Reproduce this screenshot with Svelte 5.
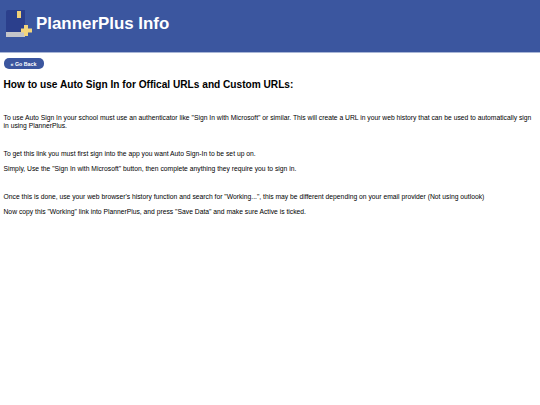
<script>
  const paragraphs = [
    { text: 'To use Auto Sign In your school must use an authenticator like "Sign In with Microsoft" or similar. This will create a URL in your web history that can be used to automatically sign in using PlannerPlus.', gap: true },
    { text: 'To get this link you must first sign into the app you want Auto Sign-In to be set up on.' },
    { text: 'Simply, Use the "Sign In with Microsoft" button, then complete anything they require you to sign in.', gap: true },
    { text: 'Once this is done, use your web browser\'s history function and search for "Working...", this may be different depending on your email provider (Not using outlook)' },
    { text: 'Now copy this "Working" link into PlannerPlus, and press "Save Data" and make sure Active is ticked.' }
  ];
</script>

<header class="banner">
  <svg class="logo" width="27" height="28" viewBox="0 0 27 28" aria-hidden="true">
    <path d="M0 2 Q0 0 2 0 H19 V22 H0 Z" fill="#2b3f8c" />
    <path d="M11 1 H15 V8 H11 Z" fill="#f0cf78" />
    <rect x="0" y="22" width="19" height="5" fill="#c4c5c9" />
    <rect x="18" y="15" width="4" height="11" fill="#f3d57c" />
    <rect x="15" y="18.5" width="11" height="4" fill="#f3d57c" />
  </svg>
  <h1>PlannerPlus Info</h1>
</header>

<main class="content">
  <button class="back">« Go Back</button>
  <h2>How to use Auto Sign In for Offical URLs and Custom URLs:</h2>
  {#each paragraphs as p}
    <p class:gap={p.gap}>{p.text}</p>
  {/each}
</main>

<style>
  :global(body) {
    background: #fff;
    font-family: "Liberation Sans", Arial, sans-serif;
    color: #000;
  }

  .banner {
    display: flex;
    align-items: center;
    gap: 3px;
    height: 53px;
    box-sizing: border-box;
    padding: 0 0 5px 6px;
    background: #3b569f;
    border-bottom: 1px solid #a9b6d6;
  }

  .logo {
    flex: none;
    margin-top: 1px;
  }

  h1 {
    margin: 0;
    font-size: 16.9px;
    font-weight: 700;
    color: #fff;
  }

  .content {
    padding: 5px 3.5px 0;
  }

  .back {
    display: block;
    height: 11px;
    width: 40px;
    padding: 0;
    border: 0;
    border-radius: 5px;
    background: #3b569f;
    color: #fff;
    font-family: inherit;
    font-size: 5.3px;
    font-weight: 700;
  }

  h2 {
    margin: 10px 0 24px;
    font-size: 10.15px;
    font-weight: 700;
  }

  p {
    margin: 0 0 7px;
    font-size: 6.75px;
    line-height: 8px;
  }

  p.gap {
    margin-bottom: 20px;
  }
</style>
